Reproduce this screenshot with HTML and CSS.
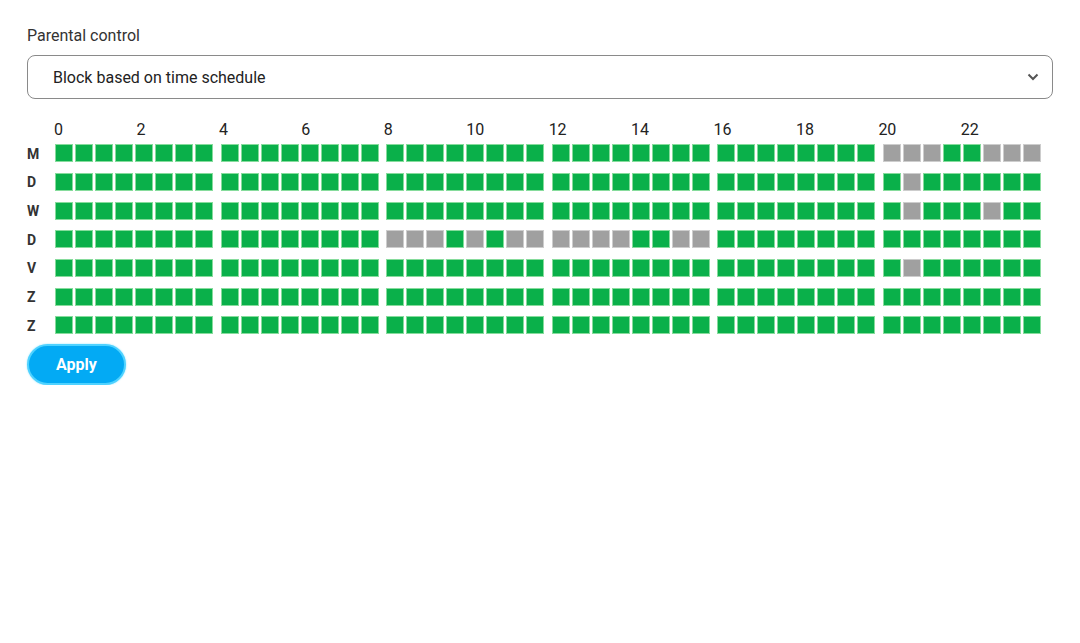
FILE: index.html
```html
<!DOCTYPE html>
<html>
<head>
<meta charset="utf-8">
<link rel="stylesheet" href="styles.css">
</head>
<body>
<div class="page">
  <div class="label">Parental control</div>
  <div class="select">
    <span class="select-text">Block based on time schedule</span>
    <svg class="chevron" width="12" height="8" viewBox="0 0 12 8"><path d="M1.5 1.5 L6 6 L10.5 1.5" fill="none" stroke="#555" stroke-width="2"/></svg>
  </div>
  <div class="schedule">
    <div class="hours">
      <span class="hour">0</span><span class="hour">2</span><span class="hour">4</span><span class="hour">6</span><span class="hour">8</span><span class="hour">10</span><span class="hour">12</span><span class="hour">14</span><span class="hour">16</span><span class="hour">18</span><span class="hour">20</span><span class="hour">22</span>
    </div>
    <div class="rows" id="rows"></div>
  </div>
  <button class="apply">Apply</button>
</div>
<script src="script.js"></script>
</body>
</html>
```
FILE: styles.css
```css
html, body { margin: 0; padding: 0; background: #fff; }
body { font-family: Roboto, "Noto Sans", "Liberation Sans", sans-serif; color: #222; }
.page { padding: 26px 27px 0 27px; }
.label { font-size: 16px; color: #333; height: 20px; line-height: 20px; }
.select {
  margin-top: 9px;
  height: 44px;
  box-sizing: border-box;
  width: 1026px;
  border: 1px solid #8a8a8a;
  border-radius: 8px;
  display: flex;
  align-items: center;
  justify-content: space-between;
  padding: 0 13px 0 25px;
}
.select-text { font-size: 16px; color: #222; }
.chevron { display: block; }
.schedule { margin-top: 20px; }
.hours { display: flex; padding-left: 27px; padding-top: 1px; height: 19px; }
.hour { flex: none; width: 82.45px; font-size: 16px; line-height: 20px; color: #222; }
.rows { margin-top: 0; }
.row { display: flex; align-items: center; height: 28.67px; }
.day { flex: none; width: 28px; font-size: 14px; font-weight: 700; color: #333; padding-top: 1px; }
.group { flex: none; display: flex; margin-right: 5.6px; }
.cell {
  flex: none;
  width: 18px; height: 18px; box-sizing: border-box;
  margin-right: 2px;
  background: #0ab04a;
  border: 1px solid #86dc9c;
}
.cell.off { background: #a0a0a0; border-color: #cdcdcd; }
.apply {
  display: block;
  margin-top: 4px;
  width: 99px; height: 41px;
  border-radius: 21px;
  background: #03aaf4;
  border: 2px solid #4fd2ff;
  box-shadow: 0 0 2px #8fe3ff;
  color: #fff;
  font-family: Roboto, "Liberation Sans", sans-serif;
  font-weight: 700;
  font-size: 16px;
  padding: 0;
}
```
FILE: script.js
```js
var days = ["M","D","W","D","V","Z","Z"];
var overrides = {
  0: {5: "00011000"},
  1: {5: "10111111"},
  2: {5: "10111011"},
  3: {2: "00010100", 3: "00001100"},
  4: {5: "10111111"}
};
var rows = document.getElementById("rows");
days.forEach(function (d, r) {
  var row = document.createElement("div");
  row.className = "row";
  var lab = document.createElement("span");
  lab.className = "day";
  lab.textContent = d;
  row.appendChild(lab);
  for (var g = 0; g < 6; g++) {
    var grp = document.createElement("div");
    grp.className = "group";
    var pat = (overrides[r] && overrides[r][g]) || "11111111";
    for (var c = 0; c < 8; c++) {
      var cell = document.createElement("span");
      cell.className = pat[c] === "1" ? "cell" : "cell off";
      grp.appendChild(cell);
    }
    row.appendChild(grp);
  }
  rows.appendChild(row);
});
```
